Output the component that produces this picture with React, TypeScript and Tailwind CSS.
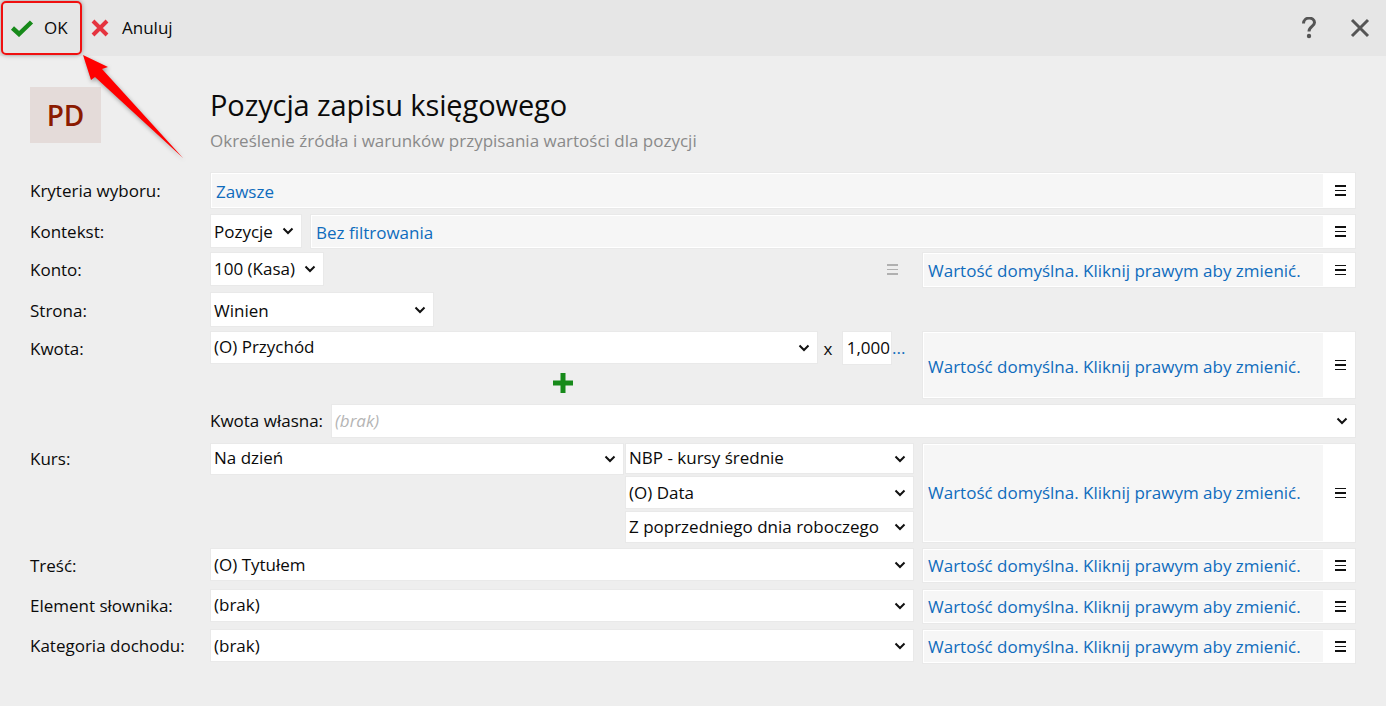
import type { ReactNode } from 'react';

const link = 'text-[#0f6cbd]';

function Chevron() {
  return (
    <svg viewBox="0 0 12 8" className="w-[12px] h-[8px] shrink-0">
      <path d="M1.5 1.5 L6 6 L10.5 1.5" fill="none" stroke="#111" strokeWidth="2" />
    </svg>
  );
}

function MenuIcon({ muted = false }: { muted?: boolean }) {
  const color = muted ? 'bg-[#b0b0b0]' : 'bg-[#111]';
  return (
    <div className="flex flex-col gap-[3px] w-[11px]">
      <div className={`h-[1.5px] ${color}`} />
      <div className={`h-[1.5px] ${color}`} />
      <div className={`h-[1.5px] ${color}`} />
    </div>
  );
}

function Select({ text, className = '', textClass = '', placeholder = false }: { text: string; className?: string; textClass?: string; placeholder?: boolean }) {
  return (
    <div className={`flex items-center justify-between bg-white border border-[#e9e9e9] pl-[3px] pr-[7px] ${className}`}>
      <span className={`whitespace-nowrap ${placeholder ? 'italic text-[#b5b5b5]' : ''} ${textClass}`}>{text}</span>
      <Chevron />
    </div>
  );
}

function ValueBox({ text, className = '', textClass = '' }: { text: string; className?: string; textClass?: string }) {
  return (
    <div className={`flex bg-white border border-[#e9e9e9] p-[1px] ${className}`}>
      <div className={`flex-1 flex items-center bg-[#f6f6f6] pl-[4px] whitespace-nowrap ${link} ${textClass}`}>{text}</div>
      <div className="w-[31px] flex items-center justify-center pl-[3px]">
        <MenuIcon />
      </div>
    </div>
  );
}

const DEFAULT_TEXT = 'Wartość domyślna. Kliknij prawym aby zmienić.';

function Row({ label, labelClass, className, children }: { label?: string; labelClass?: string; className: string; children: ReactNode }) {
  return (
    <div className={`flex ${className}`}>
      <div className={`w-[180px] shrink-0 whitespace-nowrap ${labelClass ?? ''}`}>{label}</div>
      <div className="flex-1 min-w-0">{children}</div>
    </div>
  );
}

export default function App() {
  return (
    <div className="relative w-[1386px] h-[706px] overflow-hidden bg-[#eeeeee] text-[#0a0a0a] text-[17px] leading-[22px] font-['Open_Sans','Noto_Sans',sans-serif]">
      {/* toolbar */}
      <div className="h-[56px] bg-[#e6e6e6] flex items-center pl-[1px] pr-[16px]">
        <button className="h-[54px] w-[81px] flex items-center gap-[10px] pl-[7px] border-2 border-[#f01010] rounded-[5px] shadow-[0_0_5px_rgba(0,0,0,0.35)]">
          <svg viewBox="0 0 24 18" className="w-[24px] h-[18px]">
            <path d="M2.5 9 L9 15 L21.5 3" fill="none" stroke="#178a1a" strokeWidth="4.5" />
          </svg>
          <span>OK</span>
        </button>
        <button className="flex items-center gap-[13px] ml-[9px]">
          <svg viewBox="0 0 18 18" className="w-[18px] h-[18px]">
            <path d="M2 2 L16 16 M16 2 L2 16" fill="none" stroke="#e5343f" strokeWidth="4" />
          </svg>
          <span>Anuluj</span>
        </button>
        <div className="ml-auto flex items-center gap-[34px]">
          <svg viewBox="0 0 14 22" className="w-[14px] h-[22px]">
            <path d="M1.5 6.5 C1.5 -0.5 12.5 -0.5 12.5 5.5 C12.5 9.5 7 9.5 7 14.5" fill="none" stroke="#555" strokeWidth="3" />
            <circle cx="7" cy="19" r="2.2" fill="#555" />
          </svg>
          <svg viewBox="0 0 20 20" className="w-[20px] h-[20px]">
            <path d="M2 2 L18 18 M18 2 L2 18" fill="none" stroke="#555" strokeWidth="3" />
          </svg>
        </div>
      </div>

      {/* heading */}
      <div className="flex h-[116px] pl-[30px]">
        <div className="mt-[31px] w-[71px] h-[56px] flex items-center justify-center bg-[#e4dbd9] text-[#8b1a00] text-[28px] font-semibold">PD</div>
        <div className="ml-[109px] mt-[31px]">
          <h1 className="text-[29px] leading-[36px] tracking-[-0.1px]">Pozycja zapisu księgowego</h1>
          <p className="mt-[7px] text-[#8a8a8a]">Określenie źródła i warunków przypisania wartości dla pozycji</p>
        </div>
      </div>

      {/* form */}
      <div className="pl-[30px] pr-[30px]">
        <Row label="Kryteria wyboru:" labelClass="pt-[8px]" className="h-[37px]">
          <ValueBox text="Zawsze" className="h-full" textClass="pt-[2px]" />
        </Row>
        <Row label="Kontekst:" labelClass="pt-[7px]" className="h-[35px] mt-[5px]">
          <div className="flex gap-[8px] h-full">
            <Select text="Pozycje" className="w-[92px] h-[34px]" textClass="pt-[2px]" />
            <ValueBox text="Bez filtrowania" className="flex-1 h-full" textClass="pt-[2px]" />
          </div>
        </Row>
        <Row label="Konto:" labelClass="pt-[7px]" className="h-[36px] mt-[3px]">
          <div className="flex h-full">
            <Select text="100 (Kasa)" className="w-[114px] h-[34px]" />
            <div className="w-[590px] flex items-start justify-end pt-[12px] pr-[16px]">
              <MenuIcon muted />
            </div>
            <ValueBox text={DEFAULT_TEXT} className="ml-[8px] flex-1 h-full" textClass="pt-[2px]" />
          </div>
        </Row>
        <Row label="Strona:" labelClass="pt-[8px]" className="h-[35px] mt-[4px]">
          <Select text="Winien" className="w-[224px] h-full" textClass="pt-[2px]" />
        </Row>
        <Row label="Kwota:" labelClass="pt-[7px]" className="h-[68px] mt-[4px]">
          <div className="flex h-full">
            <div className="w-[704px]">
              <div className="flex items-center h-[33px]">
                <Select text="(O) Przychód" className="w-[608px] h-full" textClass="pb-[2px]" />
                <span className="w-[24px] pr-[4px] pt-[3px] text-center">x</span>
                <div className="flex items-center justify-end w-[50px] h-[34px] mt-[1px] bg-white border border-[#e9e9e9] pr-[1px]">1,000</div>
                <span className={link}>...</span>
              </div>
              <div className="flex justify-center mt-[9px] w-[706px]">
                <svg viewBox="0 0 20 20" className="w-[20px] h-[20px]">
                  <path d="M10 0 V20 M0 10 H20" stroke="#178a1a" strokeWidth="5" />
                </svg>
              </div>
            </div>
            <ValueBox text={DEFAULT_TEXT} className="ml-[8px] flex-1 h-full" textClass="pt-[4px]" />
          </div>
        </Row>
        <div className="flex items-center h-[34px] mt-[5px] pl-[180px]">
          <span className="w-[121px] whitespace-nowrap">Kwota własna:</span>
          <Select text="(brak)" placeholder className="flex-1 h-full" />
        </div>
        <Row label="Kurs:" labelClass="pt-[5px]" className="h-[100px] mt-[5px]">
          <div className="flex h-full">
            <div className="w-[704px] flex gap-[1px]">
              <Select text="Na dzień" className="w-[414px] h-[32px]" textClass="pb-[2px]" />
              <div className="flex-1 flex flex-col gap-[2px]">
                <Select text="NBP - kursy średnie" className="h-[32px]" textClass="pb-[2px]" />
                <Select text="(O) Data" className="h-[33px]" />
                <Select text="Z poprzedniego dnia roboczego" className="h-[33px]" />
              </div>
            </div>
            <ValueBox text={DEFAULT_TEXT} className="ml-[8px] flex-1 h-full" />
          </div>
        </Row>
        {['Treść:', 'Element słownika:', 'Kategoria dochodu:'].map((label, i) => (
          <Row
            key={label}
            label={label}
            labelClass={i === 0 ? 'pt-[7px]' : 'pt-[6px]'}
            className={`h-[35px] ${i === 0 ? 'mt-[5px]' : i === 1 ? 'mt-[6px]' : 'mt-[5px]'}`}
          >
            <div className="flex h-full">
              <Select text={['(O) Tytułem', '(brak)', '(brak)'][i]} className="w-[704px] h-[33px]" textClass={i === 1 ? 'pb-[2px]' : ''} />
              <ValueBox text={DEFAULT_TEXT} className="ml-[8px] flex-1 h-full" />
            </div>
          </Row>
        ))}
      </div>

      {/* red annotation arrow */}
      <svg className="absolute left-0 top-0 w-[200px] h-[170px] pointer-events-none drop-shadow-[1px_2px_2px_rgba(0,0,0,0.35)]" viewBox="0 0 200 170">
        <polygon points="83,55 108,67 102,69 183,158 95,77 91,80" fill="#ff0000" />
      </svg>
    </div>
  );
}
